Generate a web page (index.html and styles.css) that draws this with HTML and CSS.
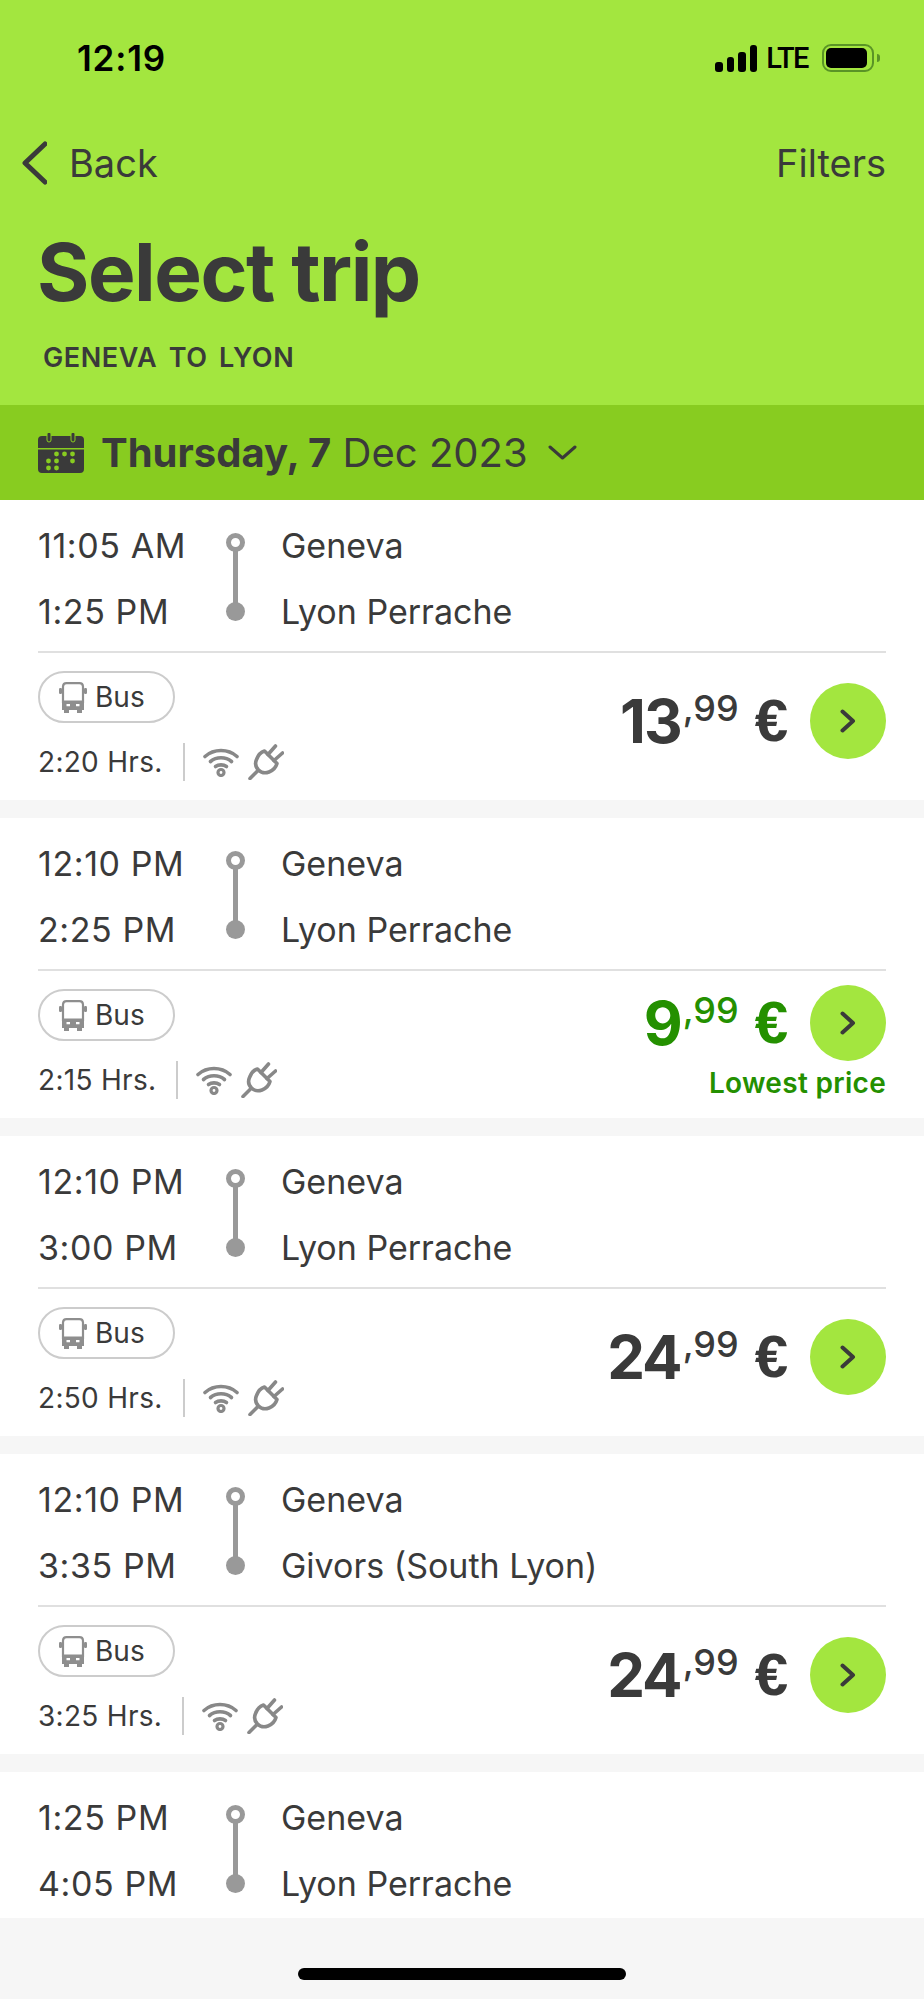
FILE: index.html
```html
<!DOCTYPE html>
<html lang="en">
<head>
  <meta charset="UTF-8">
  <title>Select trip</title>
  <link rel="stylesheet" href="styles.css">
</head>
<body>

  <svg class="sprites" width="0" height="0" aria-hidden="true">
    <symbol id="icon-bus" viewBox="0 0 28 31">
      <path d="M4 8V4.500A3.500 3.500 0 0 1 7.500 1.200h13A3.500 3.500 0 0 1 24 4.500V20H4z" fill="none" stroke="currentColor" stroke-width="2.200"/>
      <path fill-rule="evenodd" d="M3 18.500h22V28h-2v3h-5v-3H10v3H5v-3H3zM7.500 22v2.200h3.500V22zM17 22v2.200h3.500V22z" fill="currentColor"/>
      <rect x="0" y="6" width="3" height="6" rx="1.200" fill="currentColor"/>
      <rect x="25" y="6" width="3" height="6" rx="1.200" fill="currentColor"/>
    </symbol>
    <symbol id="icon-wifi" viewBox="0 0 36 30">
      <g fill="none" stroke="currentColor" stroke-width="3.600" stroke-linecap="round">
        <path d="M2 9.500C11 1.500 25 1.500 34 9.500"/>
        <path d="M7.500 14.500C13.500 9.500 22.500 9.500 28.500 14.500"/>
        <path d="M12.500 19.500C15.500 17.300 20.500 17.300 23.500 19.500"/>
      </g>
      <circle cx="18" cy="25.500" r="3" fill="none" stroke="currentColor" stroke-width="3.200"/>
    </symbol>
    <symbol id="icon-plug" viewBox="0 0 36 36">
      <g fill="none" stroke="currentColor" stroke-width="3.600" stroke-linecap="round" stroke-linejoin="round">
        <path d="M2 34.500L10 26.500"/>
        <path d="M16.500 7L29 19.500C28 23 25 26.500 21 28C17.500 29.300 13.500 29 10.500 26C7.500 23 7 19 8.500 15.500C10 11.500 13 8 16.500 7Z"/>
        <path d="M20 10.500L27.500 2"/>
        <path d="M26 16.500L34.500 9"/>
      </g>
    </symbol>
    <symbol id="icon-next" viewBox="0 0 16 24">
      <path d="M2.500 2.500L13 12L2.500 21.500" fill="none" stroke="currentColor" stroke-width="4" stroke-linecap="round" stroke-linejoin="round"/>
    </symbol>
  </svg>

  <header class="header">
    <div class="status">
      <span class="status-time">12:19</span>
      <div class="status-right">
        <div class="signal">
          <i class="bar1"></i><i class="bar2"></i><i class="bar3"></i><i class="bar4"></i>
        </div>
        <span class="lte">LTE</span>
        <div class="battery"><div class="battery-fill"></div></div>
        <div class="battery-cap"></div>
      </div>
    </div>

    <nav class="nav">
      <a class="nav-back" href="#">
        <svg width="25" height="44" viewBox="0 0 25 44"><path d="M23 3L3 22L23 41" fill="none" stroke="#3a3a3a" stroke-width="5" stroke-linecap="round" stroke-linejoin="round"/></svg>
        Back
      </a>
      <a class="nav-filters" href="#">Filters</a>
    </nav>

    <h1 class="title">Select trip</h1>
    <div class="subtitle">GENEVA TO LYON</div>
  </header>

  <div class="date-bar">
    <svg width="46" height="40" viewBox="0 0 46 40">
      <path fill="#3a3a3a" d="M4 3h38a4 4 0 0 1 4 4v8H0V7a4 4 0 0 1 4-4zM0 16.500h46V36a4 4 0 0 1-4 4H4a4 4 0 0 1-4-4z"/>
      <g fill="#3a3a3a" stroke="#88cc20" stroke-width="1">
        <rect x="9" y="-1" width="4" height="10" rx="2"/>
        <rect x="33" y="-1" width="4" height="10" rx="2"/>
      </g>
      <g fill="#88cc20">
        <circle cx="18.500" cy="21" r="2.400"/><circle cx="26.500" cy="21" r="2.400"/><circle cx="34.500" cy="21" r="2.400"/>
        <circle cx="10.500" cy="28" r="2.400"/><circle cx="18.500" cy="28" r="2.400"/><circle cx="34.500" cy="28" r="2.400"/>
        <circle cx="10.500" cy="35" r="2.400"/><circle cx="18.500" cy="35" r="2.400"/>
      </g>
    </svg>
    <div class="date-text"><b>Thursday, 7</b> Dec 2023</div>
    <svg class="date-arrow" width="29" height="15" viewBox="0 0 29 15"><path d="M2 2L14.500 13L27 2" fill="none" stroke="#3a3a3a" stroke-width="3" stroke-linecap="round" stroke-linejoin="round"/></svg>
  </div>

  <main class="trips">

    <article class="trip">
      <div class="route">
        <span class="time">11:05 AM</span><span class="line"></span><span class="place">Geneva</span>
        <span class="time">1:25 PM</span><span class="place">Lyon Perrache</span>
      </div>
      <div class="details">
        <div class="info">
          <div class="pill"><svg class="bus" width="28" height="31"><use href="#icon-bus"/></svg>Bus</div>
          <div class="meta">
            <span class="duration">2:20 Hrs.</span>
            <svg class="wifi" width="36" height="30"><use href="#icon-wifi"/></svg>
            <svg class="plug" width="36" height="36"><use href="#icon-plug"/></svg>
          </div>
        </div>
        <div class="buy">
          <div class="buy-row">
            <div class="price"><span class="amount">13</span><span class="cents">,99</span><span class="euro">€</span></div>
            <a class="go" href="#"><svg width="16" height="24"><use href="#icon-next"/></svg></a>
          </div>
        </div>
      </div>
    </article>

    <article class="trip">
      <div class="route">
        <span class="time">12:10 PM</span><span class="line"></span><span class="place">Geneva</span>
        <span class="time">2:25 PM</span><span class="place">Lyon Perrache</span>
      </div>
      <div class="details">
        <div class="info">
          <div class="pill"><svg class="bus" width="28" height="31"><use href="#icon-bus"/></svg>Bus</div>
          <div class="meta">
            <span class="duration">2:15 Hrs.</span>
            <svg class="wifi" width="36" height="30"><use href="#icon-wifi"/></svg>
            <svg class="plug" width="36" height="36"><use href="#icon-plug"/></svg>
          </div>
        </div>
        <div class="buy lowest">
          <div class="buy-row">
            <div class="price"><span class="amount">9</span><span class="cents">,99</span><span class="euro">€</span></div>
            <a class="go" href="#"><svg width="16" height="24"><use href="#icon-next"/></svg></a>
          </div>
          <div class="lowest-label">Lowest price</div>
        </div>
      </div>
    </article>

    <article class="trip">
      <div class="route">
        <span class="time">12:10 PM</span><span class="line"></span><span class="place">Geneva</span>
        <span class="time">3:00 PM</span><span class="place">Lyon Perrache</span>
      </div>
      <div class="details">
        <div class="info">
          <div class="pill"><svg class="bus" width="28" height="31"><use href="#icon-bus"/></svg>Bus</div>
          <div class="meta">
            <span class="duration">2:50 Hrs.</span>
            <svg class="wifi" width="36" height="30"><use href="#icon-wifi"/></svg>
            <svg class="plug" width="36" height="36"><use href="#icon-plug"/></svg>
          </div>
        </div>
        <div class="buy">
          <div class="buy-row">
            <div class="price"><span class="amount">24</span><span class="cents">,99</span><span class="euro">€</span></div>
            <a class="go" href="#"><svg width="16" height="24"><use href="#icon-next"/></svg></a>
          </div>
        </div>
      </div>
    </article>

    <article class="trip">
      <div class="route">
        <span class="time">12:10 PM</span><span class="line"></span><span class="place">Geneva</span>
        <span class="time">3:35 PM</span><span class="place">Givors (South Lyon)</span>
      </div>
      <div class="details">
        <div class="info">
          <div class="pill"><svg class="bus" width="28" height="31"><use href="#icon-bus"/></svg>Bus</div>
          <div class="meta">
            <span class="duration">3:25 Hrs.</span>
            <svg class="wifi" width="36" height="30"><use href="#icon-wifi"/></svg>
            <svg class="plug" width="36" height="36"><use href="#icon-plug"/></svg>
          </div>
        </div>
        <div class="buy">
          <div class="buy-row">
            <div class="price"><span class="amount">24</span><span class="cents">,99</span><span class="euro">€</span></div>
            <a class="go" href="#"><svg width="16" height="24"><use href="#icon-next"/></svg></a>
          </div>
        </div>
      </div>
    </article>

    <article class="trip trip-cut">
      <div class="route">
        <span class="time">1:25 PM</span><span class="line"></span><span class="place">Geneva</span>
        <span class="time">4:05 PM</span><span class="place">Lyon Perrache</span>
      </div>
    </article>

  </main>

  <footer class="home">
    <div class="home-bar"></div>
  </footer>

</body>
</html>
```

FILE: styles.css
```css
*, *::before, *::after {
  box-sizing: border-box;
}

html, body {
  margin: 0;
  padding: 0;
}

body {
  display: flex;
  flex-direction: column;
  height: 1999px;
  overflow: hidden;
  font-family: Inter, "Liberation Sans", sans-serif;
  background-color: #f6f6f6;
  color: #3a3a3a;
}

a {
  color: inherit;
  text-decoration: none;
}

.sprites {
  position: absolute;
}

/* Header */
.header {
  height: 405px;
  padding-top: 44px;
  background-color: #a3e63f;
}

.status {
  display: flex;
  justify-content: space-between;
  align-items: center;
  height: 28px;
  padding: 0 44px 0 77px;
}

.status-time {
  font-size: 35px;
  font-weight: 600;
  letter-spacing: 0.8px;
  color: #000;
}

.status-right {
  display: flex;
  align-items: center;
}

.signal {
  display: flex;
  align-items: flex-end;
  gap: 4px;
  height: 27px;
}

.signal i {
  display: block;
  width: 7.500px;
  background-color: #000;
  border-radius: 3px;
}

.bar1 { height: 10px; }
.bar2 { height: 15px; }
.bar3 { height: 20px; }
.bar4 { height: 27px; }

.lte {
  margin: 0 14px 0 9px;
  font-family: Roboto, sans-serif;
  font-size: 29px;
  font-weight: 500;
  letter-spacing: -1.500px;
  color: #000;
}

.battery {
  width: 52px;
  height: 28px;
  padding: 2px 5px 2px 2px;
  border: 2px solid #5a9426;
  border-radius: 9px;
}

.battery-fill {
  height: 100%;
  background-color: #000;
  border-radius: 5px;
}

.battery-cap {
  width: 3px;
  height: 8px;
  margin-left: 3px;
  background-color: #5a9426;
  border-radius: 0 3px 3px 0;
}

.nav {
  display: flex;
  justify-content: space-between;
  align-items: center;
  height: 48px;
  margin-top: 67px;
  padding: 0 38px 0 22px;
  font-size: 38px;
}

.nav-back {
  display: flex;
  align-items: center;
  gap: 22px;
}

.title {
  margin: 41px 0 0 37px;
  font-size: 80px;
  font-weight: 700;
  line-height: 88px;
  letter-spacing: -1.500px;
}

.subtitle {
  margin: 25px 0 0 43px;
  font-size: 27px;
  font-weight: 600;
  line-height: 34px;
  letter-spacing: 0.6px;
  word-spacing: 4px;
}

/* Date */
.date-bar {
  display: flex;
  align-items: center;
  height: 95px;
  padding-left: 38px;
  background-color: #88cc20;
}

.date-text {
  margin-left: 17px;
  font-size: 40px;
}

.date-text b {
  font-weight: 700;
}

.date-arrow {
  margin-left: 20px;
}

/* Trips */
.trips {
  flex: 1;
  display: flex;
  flex-direction: column;
  gap: 18px;
}

.trip {
  height: 300px;
  background-color: #fff;
}

.trip-cut {
  height: 146px;
}

.route {
  display: grid;
  grid-template-columns: 152px 91px 1fr;
  grid-auto-rows: 66px;
  align-items: center;
  padding: 12px 38px 0;
  font-size: 34px;
}

.time {
  letter-spacing: 0.6px;
  white-space: nowrap;
}

.line {
  grid-row: span 2;
  justify-self: center;
  position: relative;
  width: 5px;
  height: 76px;
  background-color: #999;
}

.line::before,
.line::after {
  content: "";
  position: absolute;
  left: -7px;
  width: 19px;
  height: 19px;
  border-radius: 50%;
  background-color: #999;
}

.line::before {
  top: -7px;
  background-color: #fff;
  border: 5px solid #999;
}

.line::after {
  bottom: -5px;
}

.details {
  display: flex;
  justify-content: space-between;
  align-items: center;
  height: 146px;
  margin: 7px 38px 0;
  border-top: 2px solid #e0e0e0;
}

.info {
  align-self: flex-start;
  margin-top: 18px;
}

.pill {
  display: flex;
  align-items: center;
  width: 137px;
  height: 52px;
  padding-left: 19px;
  border: 2px solid #ccc;
  border-radius: 26px;
  font-size: 28px;
}

.bus {
  margin-right: 8px;
  color: #8e8e8e;
}

.meta {
  display: flex;
  align-items: center;
  margin-top: 20px;
  height: 38px;
}

.duration {
  height: 38px;
  padding-right: 20px;
  line-height: 38px;
  font-size: 28px;
  letter-spacing: 0.3px;
  border-right: 2px solid #ccc;
}

.wifi {
  margin-left: 18px;
  color: #888;
}

.plug {
  margin-left: 9px;
  color: #888;
}

.buy {
  display: flex;
  flex-direction: column;
  align-items: flex-end;
  margin-bottom: 8px;
}

.buy.lowest {
  margin-bottom: 1px;
}

.buy-row {
  display: flex;
  align-items: center;
  gap: 22px;
}

.price {
  display: flex;
  align-items: flex-start;
  font-family: "Liberation Sans", sans-serif;
  font-weight: 700;
  line-height: 76px;
}

.amount {
  font-family: Inter, sans-serif;
  font-size: 60px;
  letter-spacing: -2px;
}

.cents {
  margin-left: 2px;
  font-family: Inter, sans-serif;
  font-size: 36px;
  font-weight: 500;
  line-height: 50px;
}

.euro {
  margin-left: 16px;
  font-size: 60px;
}

.go {
  display: flex;
  align-items: center;
  justify-content: center;
  width: 76px;
  height: 76px;
  border-radius: 50%;
  background-color: #a3e63f;
  color: #3a3a3a;
}

.lowest .price {
  color: #249000;
}

.lowest-label {
  margin-top: 5px;
  font-size: 28px;
  font-weight: 600;
  line-height: 34px;
  letter-spacing: 0.3px;
  color: #249000;
}

/* Home indicator */
.home {
  display: flex;
  justify-content: center;
  height: 81px;
  padding-top: 50px;
}

.home-bar {
  width: 328px;
  height: 12px;
  background-color: #000;
  border-radius: 6px;
}
```
